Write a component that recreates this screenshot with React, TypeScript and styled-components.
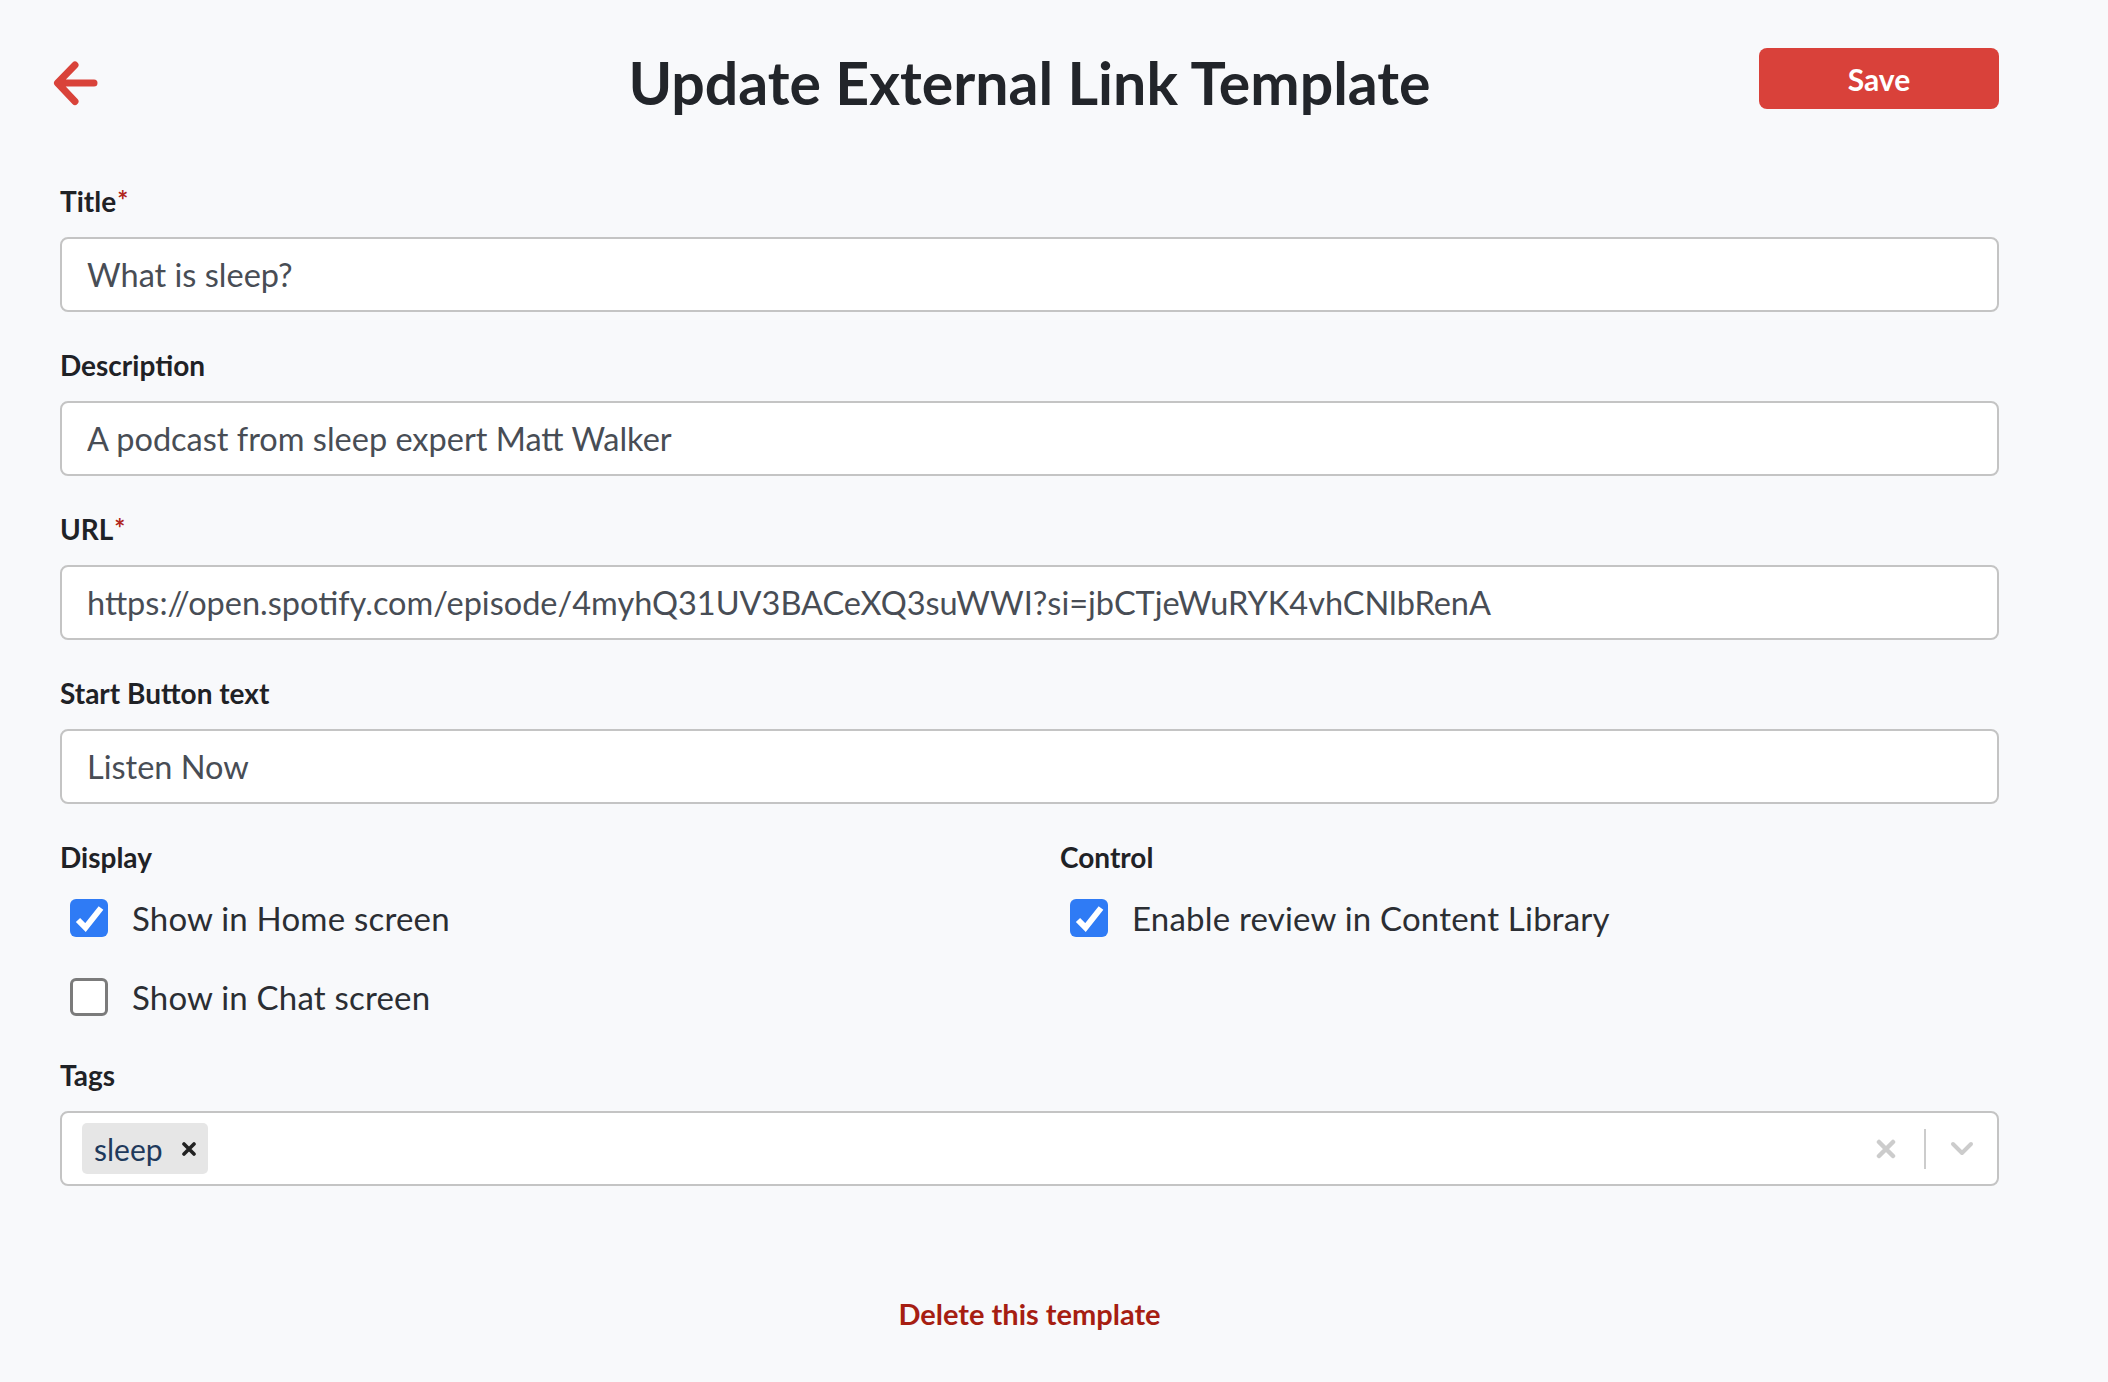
import React from "react";
import styled, { createGlobalStyle } from "styled-components";

const Global = createGlobalStyle`
  html, body { margin: 0; padding: 0; background: #f8f9fb; }
  body { font-family: Lato, "Noto Sans", sans-serif; }
  * { box-sizing: border-box; }
`;

const Page = styled.div`
  min-height: 1382px;
  padding: 48px 109px 0 60px;
`;

const Header = styled.header`
  display: grid;
  grid-template-columns: 1fr auto 1fr;
  align-items: center;
  height: 70px;
  margin-bottom: 66px;
`;

const BackButton = styled.button`
  justify-self: start;
  background: none;
  border: 0;
  padding: 0;
  margin-left: -10px;
  width: 50px;
  height: 50px;
  display: flex;
  cursor: pointer;
`;

const Heading = styled.h1`
  margin: 0;
  font-size: 59px;
  font-weight: 700;
  line-height: 70px;
  color: #22252a;
`;

const SaveButton = styled.button`
  justify-self: end;
  align-self: start;
  width: 240px;
  height: 61px;
  border: 0;
  border-radius: 8px;
  background: #d9413a;
  color: #fff;
  font-family: Lato, sans-serif;
  font-weight: 700;
  font-size: 30px;
  cursor: pointer;
`;

const Field = styled.div`
  margin-bottom: 36px;
`;

const Label = styled.label<{ $mb?: number }>`
  display: block;
  font-size: 28px;
  font-weight: 700;
  line-height: 34px;
  color: #1f2226;
  margin-bottom: ${(p) => p.$mb ?? 19}px;
`;

const Required = styled.span`
  color: #b0261c;
  font-size: 26px;
  line-height: 0;
  vertical-align: 2px;
  margin-left: 1px;
`;

const TextInput = styled.input`
  display: block;
  width: 100%;
  height: 75px;
  border: 2px solid #c4c4c4;
  border-radius: 8px;
  background: #fff;
  padding: 0 25px;
  font-family: Lato, sans-serif;
  font-size: 32.5px;
  color: #484d55;
  outline: none;
`;

const Options = styled.div`
  display: grid;
  grid-template-columns: 1000px 1fr;
  margin-bottom: 41px;
`;

const CheckList = styled.div`
  display: flex;
  flex-direction: column;
  gap: 39px;
  padding-left: 10px;
`;

const CheckRow = styled.label`
  display: flex;
  align-items: center;
  gap: 24px;
  height: 40px;
  font-size: 33px;
  letter-spacing: 0.2px;
  color: #2b2e33;
  cursor: pointer;
`;

const Box = styled.span<{ $checked: boolean }>`
  width: 38px;
  height: 38px;
  border-radius: 6px;
  display: flex;
  align-items: center;
  justify-content: center;
  flex: none;
  background: ${(p) => (p.$checked ? "#2f7bf5" : "#fff")};
  border: ${(p) => (p.$checked ? "none" : "3px solid #7b7b7b")};
`;

const TagBox = styled.div`
  display: flex;
  align-items: center;
  height: 75px;
  border: 2px solid #c4c4c4;
  border-radius: 8px;
  background: #fff;
  padding: 0 23px 0 20px;
`;

const Chip = styled.span`
  display: flex;
  align-items: center;
  height: 51px;
  padding: 0 12px 0 12px;
  background: #e6e6e6;
  border-radius: 5px;
  font-size: 30px;
  color: #1f3a5c;
  gap: 19px;
`;

const Spacer = styled.div`
  flex: 1;
`;

const Separator = styled.span`
  width: 2px;
  height: 40px;
  background: #cccccc;
  margin: 0 24px 0 28px;
`;

const DeleteLink = styled.button`
  display: block;
  margin: 110px auto 0;
  background: none;
  border: 0;
  font-family: Lato, sans-serif;
  font-size: 29px;
  font-weight: 700;
  line-height: 34px;
  color: #a61e12;
  cursor: pointer;
`;

const Check = ({ checked }: { checked: boolean }) => (
  <Box $checked={checked}>
    {checked && (
      <svg width="38" height="38" viewBox="0 0 38 38">
        <path d="M8 21 L15.5 28.5 L31 9" fill="none" stroke="#fff" strokeWidth="6" strokeLinejoin="miter" />
      </svg>
    )}
  </Box>
);

const fields = [
  { label: "Title", required: true, value: "What is sleep?" },
  { label: "Description", required: false, value: "A podcast from sleep expert Matt Walker" },
  { label: "URL", required: true, value: "https://open.spotify.com/episode/4myhQ31UV3BACeXQ3suWWI?si=jbCTjeWuRYK4vhCNlbRenA" },
  { label: "Start Button text", required: false, value: "Listen Now" },
];

export default function App() {
  return (
    <>
      <Global />
      <Page>
        <Header>
          <BackButton aria-label="Back">
            <svg width="50" height="50" viewBox="0 0 50 50">
              <path d="M44 25 H8 M25 7 L7.5 25 L25 43.5" fill="none" stroke="#d9433a" strokeWidth="7" strokeLinecap="round" strokeLinejoin="round" />
            </svg>
          </BackButton>
          <Heading>Update External Link Template</Heading>
          <SaveButton>Save</SaveButton>
        </Header>

        {fields.map((f) => (
          <Field key={f.label}>
            <Label>
              {f.label}
              {f.required && <Required>*</Required>}
            </Label>
            <TextInput defaultValue={f.value} />
          </Field>
        ))}

        <Options>
          <div>
            <Label $mb={24}>Display</Label>
            <CheckList>
              <CheckRow>
                <Check checked />
                Show in Home screen
              </CheckRow>
              <CheckRow>
                <Check checked={false} />
                Show in Chat screen
              </CheckRow>
            </CheckList>
          </div>
          <div>
            <Label $mb={24}>Control</Label>
            <CheckList>
              <CheckRow>
                <Check checked />
                Enable review in Content Library
              </CheckRow>
            </CheckList>
          </div>
        </Options>

        <div>
          <Label>Tags</Label>
          <TagBox>
            <Chip>
              sleep
              <svg width="14" height="14" viewBox="0 0 14 14">
                <path d="M2 2 L12 12 M12 2 L2 12" stroke="#222" strokeWidth="3.6" strokeLinecap="round" />
              </svg>
            </Chip>
            <Spacer />
            <svg width="20" height="20" viewBox="0 0 20 20">
              <path d="M3 3 L17 17 M17 3 L3 17" stroke="#cccccc" strokeWidth="4.5" strokeLinecap="round" />
            </svg>
            <Separator />
            <svg width="24" height="16" viewBox="0 0 24 16">
              <path d="M3 3 L12 12 L21 3" fill="none" stroke="#cccccc" strokeWidth="4" strokeLinecap="round" strokeLinejoin="round" />
            </svg>
          </TagBox>
        </div>

        <DeleteLink>Delete this template</DeleteLink>
      </Page>
    </>
  );
}
